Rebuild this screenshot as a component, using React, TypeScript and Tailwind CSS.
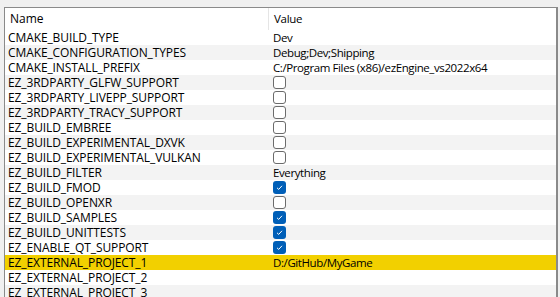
import React from 'react';

type Row = {
  name: string;
  value?: string;
  check?: boolean;
};

const rows: Row[] = [
  { name: 'CMAKE_BUILD_TYPE', value: 'Dev' },
  { name: 'CMAKE_CONFIGURATION_TYPES', value: 'Debug;Dev;Shipping' },
  { name: 'CMAKE_INSTALL_PREFIX', value: 'C:/Program Files (x86)/ezEngine_vs2022x64' },
  { name: 'EZ_3RDPARTY_GLFW_SUPPORT', check: false },
  { name: 'EZ_3RDPARTY_LIVEPP_SUPPORT', check: false },
  { name: 'EZ_3RDPARTY_TRACY_SUPPORT', check: false },
  { name: 'EZ_BUILD_EMBREE', check: false },
  { name: 'EZ_BUILD_EXPERIMENTAL_DXVK', check: false },
  { name: 'EZ_BUILD_EXPERIMENTAL_VULKAN', check: false },
  { name: 'EZ_BUILD_FILTER', value: 'Everything' },
  { name: 'EZ_BUILD_FMOD', check: true },
  { name: 'EZ_BUILD_OPENXR', check: false },
  { name: 'EZ_BUILD_SAMPLES', check: true },
  { name: 'EZ_BUILD_UNITTESTS', check: true },
  { name: 'EZ_ENABLE_QT_SUPPORT', check: true },
  { name: 'EZ_EXTERNAL_PROJECT_1', value: 'D:/GitHub/MyGame' },
  { name: 'EZ_EXTERNAL_PROJECT_2', value: '' },
  { name: 'EZ_EXTERNAL_PROJECT_3', value: '' },
];

const Checkbox: React.FC<{ checked: boolean }> = ({ checked }) =>
  checked ? (
    <div className="w-[13px] h-[13px] rounded-[3px] bg-[#005fb8] flex items-center justify-center">
      <svg width="9" height="9" viewBox="0 0 9 9">
        <path d="M2 4.8 L3.7 6.4 L7 2.8" fill="none" stroke="#ffffff" strokeWidth="1" />
      </svg>
    </div>
  ) : (
    <div className="w-[13px] h-[13px] rounded-[3px] border border-[#6b6b6b] bg-white" />
  );

export default function App() {
  const selected = 15;

  return (
    <div
      className="w-[560px] h-[297px] bg-[#f0f0f0] pt-[7px] pl-[4px] overflow-hidden text-[12px] text-black"
      style={{ fontFamily: '"Open Sans", "Noto Sans", sans-serif' }}
    >
      <div className="w-[554px] h-[300px] border border-r-2 border-[#8a8a8a] bg-white">
        {/* header */}
        <div className="flex h-[22px] items-center">
          <div className="w-[263px] pl-[5px]">Name</div>
          <div className="w-px h-full bg-[#e5e5e5]" />
          <div className="pl-[5px] text-[11.5px] tracking-[-0.3px]">Value</div>
        </div>

        {rows.map((row, i) => (
          <div
            key={i}
            className={
              i === selected
                ? 'flex h-[15px] items-center bg-[#f2d000]'
                : i % 2 === 1
                ? 'flex h-[15px] items-center bg-[#f3f3f3]'
                : 'flex h-[15px] items-center bg-white'
            }
          >
            <div className="w-[264px] pl-[3px] leading-[15px] whitespace-nowrap tracking-[-0.1px]">{row.name}</div>
            <div className="pl-[4px] leading-[15px] whitespace-nowrap text-[11.5px] tracking-[-0.4px]">
              {row.check !== undefined ? <Checkbox checked={row.check} /> : row.value}
            </div>
          </div>
        ))}
      </div>
    </div>
  );
}
